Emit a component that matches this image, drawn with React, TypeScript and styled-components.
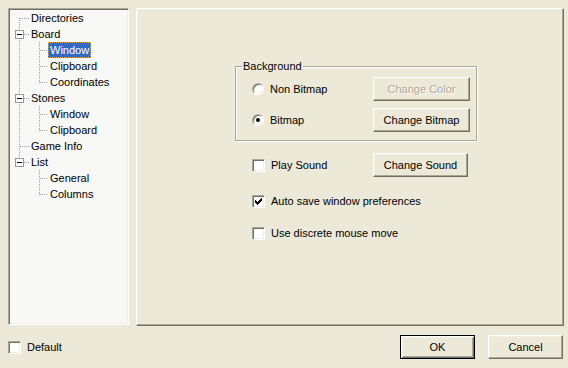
import React, { FC } from 'react'
import styled, { createGlobalStyle, css } from 'styled-components'

const GlobalStyle = createGlobalStyle`
  html, body {
    margin: 0;
    padding: 0;
    background: #ece9d8;
  }
  body {
    font-family: 'Liberation Sans', Arial, sans-serif;
    font-size: 11px;
    color: #000;
  }
`

type Node = {
  label: string
  depth: number
  open?: boolean
  first?: boolean
  last?: boolean
  selected?: boolean
  parentLast?: boolean
}

const tree: Node[] = [
  { label: 'Directories', depth: 0, first: true },
  { label: 'Board', depth: 0, open: true },
  { label: 'Window', depth: 1, selected: true },
  { label: 'Clipboard', depth: 1 },
  { label: 'Coordinates', depth: 1, last: true },
  { label: 'Stones', depth: 0, open: true },
  { label: 'Window', depth: 1 },
  { label: 'Clipboard', depth: 1, last: true },
  { label: 'Game Info', depth: 0 },
  { label: 'List', depth: 0, open: true, last: true },
  { label: 'General', depth: 1, parentLast: true },
  { label: 'Columns', depth: 1, last: true, parentLast: true },
]

const DOT = { stroke: '#a0a0a0', strokeDasharray: '1 1', shapeRendering: 'crispEdges' as const }

const Gutter: FC<{ node: Node }> = ({ node }) => {
  const w = 19 * (node.depth + 1)
  return (
    <svg width={w} height={16} style={{ flex: 'none' }}>
      {node.depth === 0 ? (
        <>
          <line x1={9.5} y1={node.first ? 8 : 0} x2={9.5} y2={node.last ? 9 : 16} {...DOT} />
          <line x1={10} y1={8.5} x2={19} y2={8.5} {...DOT} />
          {node.open && (
            <>
              <rect x={5.5} y={4.5} width={8} height={8} fill="#fff" stroke="#8f9a9c" shapeRendering="crispEdges" />
              <line x1={7} y1={8.5} x2={12} y2={8.5} stroke="#000" shapeRendering="crispEdges" />
            </>
          )}
        </>
      ) : (
        <>
          {!node.parentLast && <line x1={9.5} y1={0} x2={9.5} y2={16} {...DOT} />}
          <line x1={29.5} y1={0} x2={29.5} y2={node.last ? 9 : 16} {...DOT} />
          <line x1={30} y1={8.5} x2={38} y2={8.5} {...DOT} />
        </>
      )}
    </svg>
  )
}

const CheckMark: FC = () => (
  <svg width={7} height={7} viewBox="0 0 7 7">
    <path d="M0 2h1v1h1v1h1v-1h1v-1h1v-1h1v-1h1v3h-1v1h-1v1h-1v1h-1v1h-1v-1h-1v-1h-1z" fill="#000" />
  </svg>
)

export default function App() {
  return (
    <>
      <GlobalStyle />
      <Dialog>
        <Main>
          <TreePanel>
            {tree.map((node, i) => (
              <TreeRow key={i}>
                <Gutter node={node} />
                <TreeLabel selected={node.selected}>{node.label}</TreeLabel>
              </TreeRow>
            ))}
          </TreePanel>
          <Page>
            <Group>
              <Legend>Background</Legend>
              <GroupRow>
                <Radio />
                <OptionText>Non Bitmap</OptionText>
                <Button width={97} disabled>Change Color</Button>
              </GroupRow>
              <GroupRow gap={7}>
                <Radio checked />
                <OptionText>Bitmap</OptionText>
                <Button width={97}>Change Bitmap</Button>
              </GroupRow>
            </Group>
            <SoundRow>
              <CheckBox />
              <OptionText>Play Sound</OptionText>
              <Button width={95}>Change Sound</Button>
            </SoundRow>
            <CheckRow>
              <CheckBox>
                <CheckMark />
              </CheckBox>
              <OptionText>Auto save window preferences</OptionText>
            </CheckRow>
            <CheckRow>
              <CheckBox />
              <OptionText>Use discrete mouse move</OptionText>
            </CheckRow>
          </Page>
        </Main>
        <Footer>
          <CheckBox />
          <OptionText>Default</OptionText>
          <Spacer />
          <Button width={75} isDefault>OK</Button>
          <Button width={75} style={{ marginLeft: 13 }}>Cancel</Button>
        </Footer>
      </Dialog>
    </>
  )
}

const Dialog = styled.div`
  width: 568px;
  height: 368px;
  box-sizing: border-box;
  padding: 8px 4px 0 8px;
  display: flex;
  flex-direction: column;
  background: #ece9d8;
`

const Main = styled.div`
  height: 318px;
  display: flex;
  gap: 7px;
`

const TreePanel = styled.div`
  width: 121px;
  height: 317px;
  box-sizing: border-box;
  flex: none;
  background: #f8f8f6;
  border: 1px solid;
  border-color: #aca899 #fff #fff #aca899;
  box-shadow: inset 1px 1px 0 #716f64, inset -1px -1px 0 #f1efe2;
  padding: 1px 0 0 1px;
`

const TreeRow = styled.div`
  display: flex;
  height: 16px;
  align-items: stretch;
`

const TreeLabel = styled.span<{ selected?: boolean }>`
  line-height: 16px;
  padding: 0 2px;
  white-space: nowrap;
  ${p =>
    p.selected &&
    css`
      background: #316ac5;
      color: #fff;
      outline: 1px dotted #e8b04a;
      outline-offset: -1px;
    `}
`

const Page = styled.div`
  flex: 1;
  box-sizing: border-box;
  border: 1px solid;
  border-color: #fff #716f64 #716f64 #fff;
  box-shadow: inset -1px -1px 0 #aca899, inset 1px 1px 0 #f1efe2;
  padding: 51px 0 0 98px;
  display: flex;
  flex-direction: column;
`

const Group = styled.fieldset`
  width: 242px;
  box-sizing: border-box;
  margin: 0;
  padding: 0 0 8px 0;
  min-width: 0;
  border: 1px solid #aca899;
  border-radius: 0;
  box-shadow: 1px 1px 0 #fff, inset 1px 1px 0 #fff;
`

const Legend = styled.legend`
  margin-left: 6px;
  padding: 0 1px;
  line-height: 13px;
  font-size: 11px;
`

const GroupRow = styled.div<{ gap?: number }>`
  display: flex;
  align-items: center;
  height: 24px;
  margin-top: ${p => p.gap ?? 4}px;
  padding: 0 6px 0 16px;
`

const SoundRow = styled.div`
  width: 242px;
  display: flex;
  align-items: center;
  height: 24px;
  margin-top: 12px;
  padding: 0 9px 0 17px;
  box-sizing: border-box;
`

const CheckRow = styled.div`
  display: flex;
  align-items: center;
  height: 16px;
  margin-top: 16px;
  padding-left: 17px;
`

const OptionText = styled.span`
  margin-left: 6px;
  white-space: nowrap;
  flex: 1;
`

const Radio = styled.span<{ checked?: boolean }>`
  width: 12px;
  height: 12px;
  box-sizing: border-box;
  flex: none;
  border-radius: 50%;
  border: 1px solid;
  border-color: #aca899 #fff #fff #aca899;
  background: #fff;
  box-shadow: inset 1px 1px 0 #716f64, inset -1px -1px 0 #f1efe2;
  display: flex;
  align-items: center;
  justify-content: center;
  &::after {
    content: '';
    width: 4px;
    height: 4px;
    border-radius: 50%;
    background: ${p => (p.checked ? '#000' : 'transparent')};
  }
`

const CheckBox = styled.span`
  width: 13px;
  height: 13px;
  box-sizing: border-box;
  flex: none;
  border: 1px solid;
  border-color: #aca899 #fff #fff #aca899;
  background: #fff;
  box-shadow: inset 1px 1px 0 #716f64, inset -1px -1px 0 #f1efe2;
  display: flex;
  align-items: center;
  justify-content: center;
`

const Button = styled.button<{ width: number; isDefault?: boolean }>`
  width: ${p => p.width}px;
  height: 24px;
  flex: none;
  box-sizing: border-box;
  padding: 0;
  font-family: 'Liberation Sans', Arial, sans-serif;
  font-size: 11px;
  color: #000;
  background: #ece9d8;
  border: 1px solid;
  border-color: #fff #716f64 #716f64 #fff;
  box-shadow: inset -1px -1px 0 #aca899, inset 1px 1px 0 #f1efe2;
  &:disabled {
    color: #aca899;
    text-shadow: 1px 1px 0 #fff;
  }
  ${p =>
    p.isDefault &&
    css`
      border: 1px solid #000;
      box-shadow: inset 1px 1px 0 #fff, inset -1px -1px 0 #716f64, inset 2px 2px 0 #f1efe2,
        inset -2px -2px 0 #aca899;
    `}
`

const Footer = styled.div`
  display: flex;
  align-items: center;
  padding: 9px 1px 0 0;
  height: 24px;
`

const Spacer = styled.div`
  flex: 1;
`
